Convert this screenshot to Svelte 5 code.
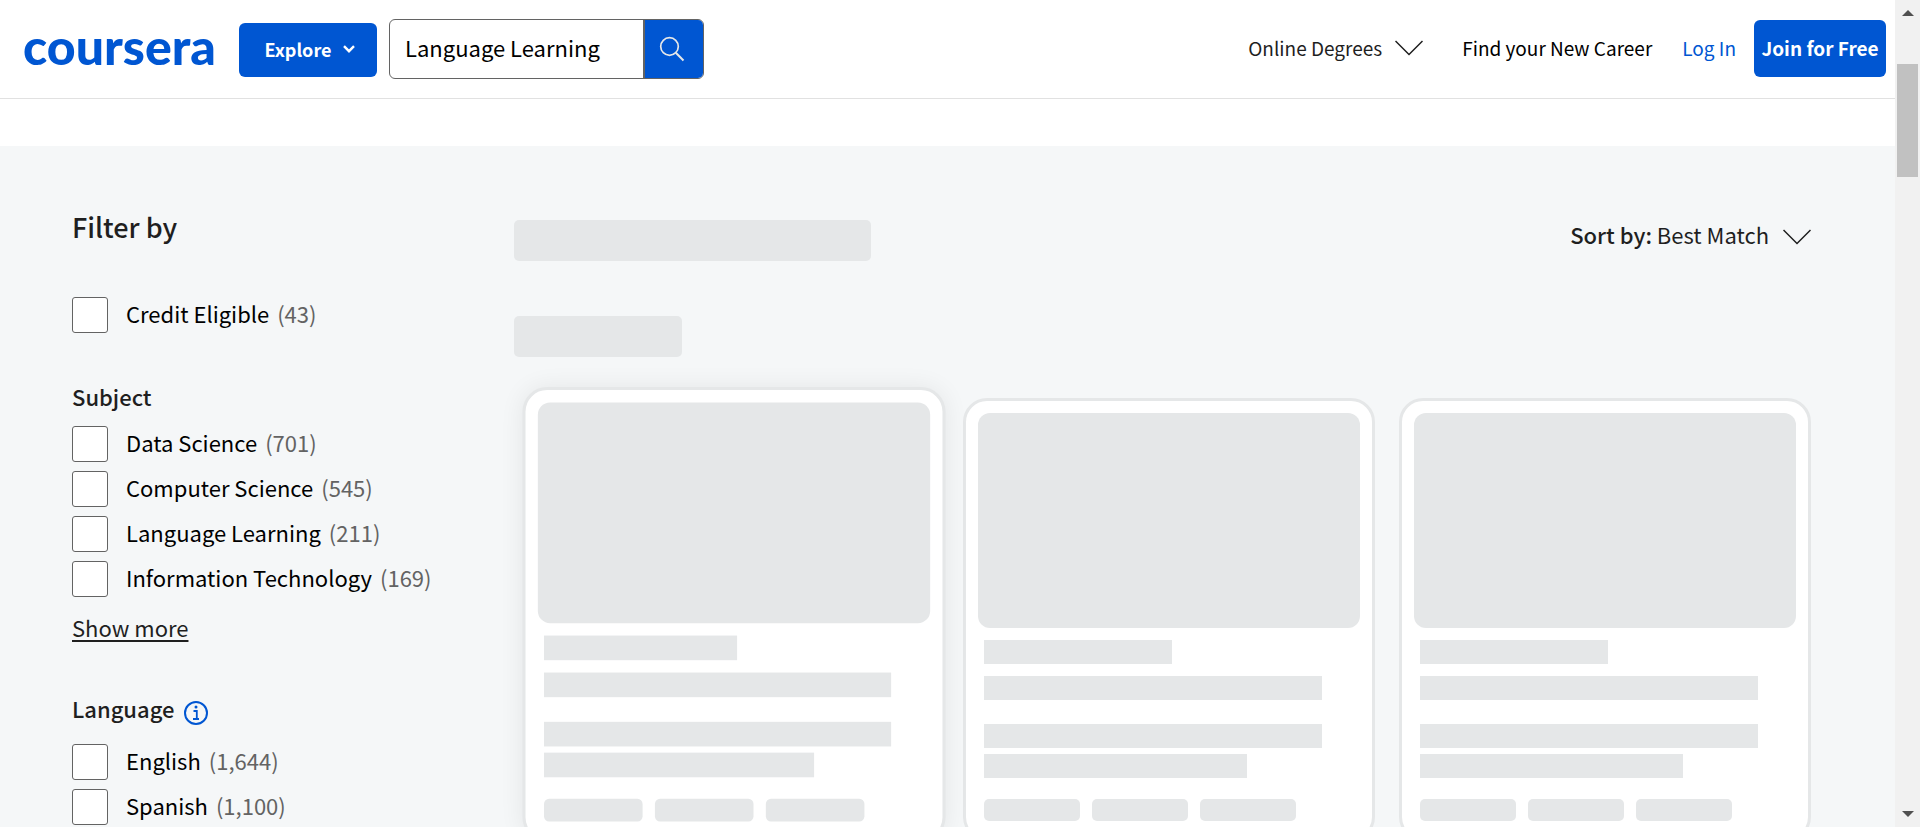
<script>
  const credit = [{ name: 'Credit Eligible', count: '43' }];
  const subjects = [
    { name: 'Data Science', count: '701' },
    { name: 'Computer Science', count: '545' },
    { name: 'Language Learning', count: '211' },
    { name: 'Information Technology', count: '169' }
  ];
  const languages = [
    { name: 'English', count: '1,644' },
    { name: 'Spanish', count: '1,100' }
  ];
  const cards = [{ raised: true }, { raised: false }, { raised: false }];
  let query = $state('Language Learning');
</script>

{#snippet options(items)}
  <ul class="options">
    {#each items as item}
      <li>
        <label class="option">
          <input type="checkbox" />
          <span>{item.name}</span>
          <span class="count">({item.count})</span>
        </label>
      </li>
    {/each}
  </ul>
{/snippet}

{#snippet chevron()}
  <svg class="chevron" width="28" height="16" viewBox="0 0 28 16" fill="none" aria-hidden="true">
    <path d="M0.500 1 L14 14.500 L27.500 1" stroke="currentColor" stroke-width="1.500" />
  </svg>
{/snippet}

<div class="window">
  <div class="page">
    <header>
      <a class="logo" href="#home">coursera</a>
      <button class="explore" type="button">
        Explore
        <svg width="12" height="8" viewBox="0 0 12 8" fill="none" aria-hidden="true">
          <path d="M1 1.200 L6 6.200 L11 1.200" stroke="currentColor" stroke-width="2.400" />
        </svg>
      </button>
      <form class="search" role="search">
        <input type="text" aria-label="Search" bind:value={query} />
        <button type="button" aria-label="Submit search">
          <svg width="26" height="26" viewBox="0 0 26 26" fill="none" aria-hidden="true">
            <circle cx="10.500" cy="10.500" r="8.800" stroke="currentColor" stroke-width="1.700" />
            <path d="M16.800 16.800 L24.500 24.500" stroke="currentColor" stroke-width="2" />
          </svg>
        </button>
      </form>
      <nav>
        <button class="degrees" type="button">Online Degrees {@render chevron()}</button>
        <a class="career" href="#career">Find your New Career</a>
        <a class="login" href="#login">Log In</a>
        <a class="join" href="#join">Join for Free</a>
      </nav>
    </header>

    <main>
      <aside>
        <h2>Filter by</h2>
        <section>
          {@render options(credit)}
        </section>
        <section>
          <h3>Subject</h3>
          {@render options(subjects)}
          <button class="more" type="button">Show more</button>
        </section>
        <section>
          <h3>
            Language
            <svg width="24" height="24" viewBox="0 0 24 24" fill="none" aria-hidden="true">
              <circle cx="12" cy="12" r="11" stroke="#0056d2" stroke-width="2" />
              <path d="M9.500 10 H12.800 V18 M9 18 H15" stroke="#0056d2" stroke-width="1.800" />
              <circle cx="12" cy="6" r="1.500" fill="#0056d2" />
            </svg>
          </h3>
          {@render options(languages)}
        </section>
      </aside>

      <div class="results">
        <div class="top">
          <div class="bone title"></div>
          <button class="sort" type="button">
            <span><b>Sort by:</b> Best Match</span>
            {@render chevron()}
          </button>
        </div>
        <div class="bone tally"></div>
        <div class="cards">
          {#each cards as card}
            <article class:raised={card.raised}>
              <div class="thumb"></div>
              <div class="lines">
                <div class="line half"></div>
                <div class="line wide"></div>
                <div class="line wide body"></div>
                <div class="line mid"></div>
                <div class="pills"><i></i><i></i><i></i></div>
              </div>
            </article>
          {/each}
        </div>
      </div>
    </main>
  </div>

  <div class="scrollbar" aria-hidden="true">
    <svg width="12" height="6" viewBox="0 0 12 6"><path d="M0 6 L6 0 L12 6 Z" fill="#505050" /></svg>
    <div class="track"><div class="handle"></div></div>
    <svg width="12" height="6" viewBox="0 0 12 6"><path d="M0 0 L6 6 L12 0 Z" fill="#505050" /></svg>
  </div>
</div>

<style>
  :global(body) {
    margin: 0;
    overflow: hidden;
  }
  .window {
    display: grid;
    grid-template-columns: minmax(0, 1fr) 25px;
    height: 100vh;
    overflow: hidden;
    color: #1f1f1f;
    font: 400 22px/28px 'Noto Sans CJK SC', 'Noto Sans', sans-serif;
  }
  .window * {
    box-sizing: border-box;
  }
  button,
  input {
    margin: 0;
    padding: 0;
    border: 0;
    background: none;
    color: inherit;
    font: inherit;
  }
  a {
    color: inherit;
    text-decoration: none;
  }
  .page {
    min-width: 0;
    overflow: hidden;
    background: #f5f7f8;
  }

  header {
    display: flex;
    align-items: center;
    height: 99px;
    padding: 0 9px 0 23px;
    border-bottom: 1px solid #e1e1e1;
    background: #fff;
  }
  .logo {
    width: 216px;
    padding-bottom: 6px;
    color: #0056d2;
    font: 900 50px/60px Lato, sans-serif;
  }
  .explore {
    display: flex;
    align-items: center;
    justify-content: center;
    gap: 12px;
    width: 138px;
    height: 54px;
    margin: 2px 12px 0 0;
    padding: 0 0 2px 4px;
    border-radius: 6px;
    background: #0056d2;
    color: #fff;
    font-size: 18px;
    font-weight: 700;
  }
  .search {
    display: flex;
    width: 315px;
    height: 60px;
    overflow: hidden;
    border: 1px solid #636363;
    border-radius: 6px;
  }
  .search input {
    flex: 1;
    min-width: 0;
    padding: 0 16px 4px 15px;
    color: #000;
    line-height: 40px;
  }
  .search button {
    display: grid;
    place-items: center;
    width: 60px;
    padding-right: 4px;
    border-left: 2px solid #636363;
    background: #0056d2;
    color: #e5e7e8;
  }
  nav {
    display: flex;
    align-items: center;
    margin-left: auto;
    padding-bottom: 1px;
    font-size: 19px;
    white-space: nowrap;
  }
  .degrees {
    display: flex;
    align-items: center;
    gap: 13px;
    margin-right: 39px;
    padding-bottom: 2px;
  }
  .career {
    margin-right: 30px;
    padding-bottom: 2px;
    color: #000;
  }
  .login {
    margin-right: 18px;
    padding-bottom: 2px;
    color: #0056d2;
  }
  .join {
    width: 132px;
    padding-bottom: 2px;
    border-radius: 6px;
    background: #0056d2;
    color: #fff;
    font-weight: 700;
    line-height: 55px;
    text-align: center;
  }

  main {
    display: grid;
    grid-template-columns: 442px minmax(0, 1fr);
    margin-top: 47px;
    padding: 0 84px 0 72px;
    box-shadow: 0 -47px #fff;
  }
  aside {
    padding-top: 64px;
  }
  h2,
  h3 {
    margin: 0;
    font-weight: 500;
  }
  h2 {
    margin-bottom: 53px;
    font-size: 27px;
    line-height: 34px;
  }
  h3 {
    display: flex;
    align-items: flex-start;
    gap: 10px;
    margin-bottom: 16px;
    font-size: 22px;
  }
  h3 svg {
    margin: 7px 0 3px;
  }
  section {
    margin-bottom: 49px;
  }
  .options {
    display: grid;
    gap: 9px;
    margin: 0;
    padding: 0;
    list-style: none;
  }
  .option {
    display: flex;
    height: 36px;
    color: #000;
    line-height: 32px;
  }
  .option input {
    appearance: none;
    width: 36px;
    height: 36px;
    margin-right: 18px;
    border: 1px solid #636363;
    border-radius: 3px;
    background: #fff;
  }
  .count {
    margin-left: 8px;
    color: #636363;
  }
  .more {
    display: block;
    margin: 16px 0 53px;
    text-decoration: underline;
    text-decoration-thickness: 2px;
    text-underline-offset: 3px;
  }

  .results {
    padding-top: 74px;
  }
  .top {
    display: flex;
    justify-content: space-between;
    align-items: flex-start;
    margin-bottom: 55px;
  }
  .bone {
    height: 41px;
    border-radius: 5px;
    background: #e5e7e8;
  }
  .title {
    width: 357px;
  }
  .tally {
    width: 168px;
  }
  .sort {
    display: flex;
    gap: 14px;
    margin-top: 1px;
    white-space: nowrap;
    line-height: 26px;
  }
  .sort b {
    font-weight: 500;
  }
  .sort svg {
    margin-top: 8px;
  }
  .cards {
    display: grid;
    grid-template-columns: repeat(3, minmax(0, 1fr));
    gap: 24px;
    padding: 41px 0 0 13px;
  }
  article {
    height: 443px;
    padding: 12px;
    border: 3px solid #e5e7e8;
    border-radius: 24px;
    background: #fff;
  }
  article.raised {
    transform: translate(1px, -5px) scale(1.027);
    box-shadow: 0 0 24px rgba(0, 0, 0, 0.07);
  }
  .thumb {
    height: 215px;
    border-radius: 12px;
    background: #e5e7e8;
  }
  .lines {
    padding: 12px 0 0 6px;
  }
  .line {
    height: 24px;
    margin-bottom: 12px;
    background: #e5e7e8;
  }
  .half {
    width: 50%;
  }
  .wide {
    width: 90%;
  }
  .body {
    margin: 24px 0 6px;
  }
  .mid {
    width: 70%;
    margin-bottom: 21px;
  }
  .pills {
    display: flex;
    gap: 12px;
  }
  .pills i {
    width: calc(25% + 2px);
    height: 22px;
    border-radius: 5px;
    background: #e5e7e8;
  }

  .scrollbar {
    display: flex;
    flex-direction: column;
    align-items: center;
    padding: 10px 0 10px;
    background: #f1f1f1;
  }
  .track {
    flex: 1;
    padding-top: 48px;
  }
  .handle {
    width: 21px;
    height: 113px;
    background: #c1c1c1;
  }
</style>
